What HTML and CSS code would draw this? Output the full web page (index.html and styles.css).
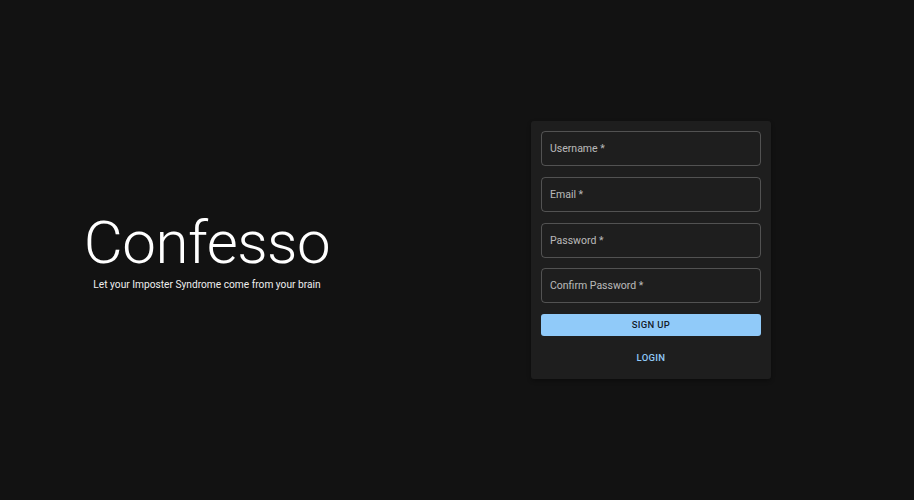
FILE: index.html
```html
<!DOCTYPE html>
<html lang="en">
<head>
  <meta charset="UTF-8">
  <meta name="viewport" content="width=device-width, initial-scale=1.0">
  <title>Confesso</title>
  <link rel="stylesheet" href="styles.css">
</head>
<body>
  <div class="page">
    <div class="brand">
      <h1>Confesso</h1>
      <p>Let your Imposter Syndrome come from your brain</p>
    </div>

    <div class="side">
      <form class="card" onsubmit="return false">
        <div class="field"><input type="text" id="username" placeholder="Username *"></div>
        <div class="field"><input type="email" id="email" placeholder="Email *"></div>
        <div class="field"><input type="password" id="password" placeholder="Password *"></div>
        <div class="field"><input type="password" id="confirm" placeholder="Confirm Password *"></div>
        <button class="signup" type="submit">SIGN UP</button>
        <button class="login" type="button">LOGIN</button>
      </form>
    </div>
  </div>
</body>
</html>
```

FILE: styles.css
```css
body {
  margin: 0;
  background-color: #121212;
  font-family: Roboto, 'Liberation Sans', Arial, sans-serif;
  color: #fff;
}
.page {
  display: grid;
  grid-template-columns: 414px 474px;
  align-items: center;
  height: 500px;
}
.brand {
  text-align: center;
}
.brand h1 {
  margin: 0;
  font-weight: 300;
  font-size: 60px;
  line-height: 66px;
  letter-spacing: -0.5px;
}
.brand p {
  margin: 3px 0 0;
  font-size: 10.2px;
  color: #eee;
}
.side {
  display: flex;
  justify-content: center;
}
.card {
  width: 220px;
  padding: 10px 10px 10px;
  background-color: #1e1e1e;
  border-radius: 3px;
  box-shadow: 0 2px 4px rgba(0, 0, 0, 0.3);
  display: flex;
  flex-direction: column;
}
.field {
  margin-bottom: 10.6px;
}
.field input {
  width: 100%;
  height: 35px;
  box-sizing: border-box;
  padding: 0 8px;
  background: transparent;
  border: 1px solid rgba(255, 255, 255, 0.23);
  border-radius: 4px;
  color: #fff;
  font-family: inherit;
  font-size: 10.5px;
}
.field input::placeholder {
  color: rgba(255, 255, 255, 0.7);
}
.signup {
  height: 22px;
  border: none;
  border-radius: 3px;
  background-color: #90caf9;
  color: rgba(0, 0, 0, 0.87);
  font-family: inherit;
  font-weight: 500;
  font-size: 9.5px;
  letter-spacing: 0.3px;
  cursor: pointer;
}
.login {
  margin-top: 11px;
  height: 22px;
  border: none;
  background: transparent;
  color: #90caf9;
  font-family: inherit;
  font-weight: 500;
  font-size: 9.5px;
  letter-spacing: 0.3px;
  cursor: pointer;
}
```
